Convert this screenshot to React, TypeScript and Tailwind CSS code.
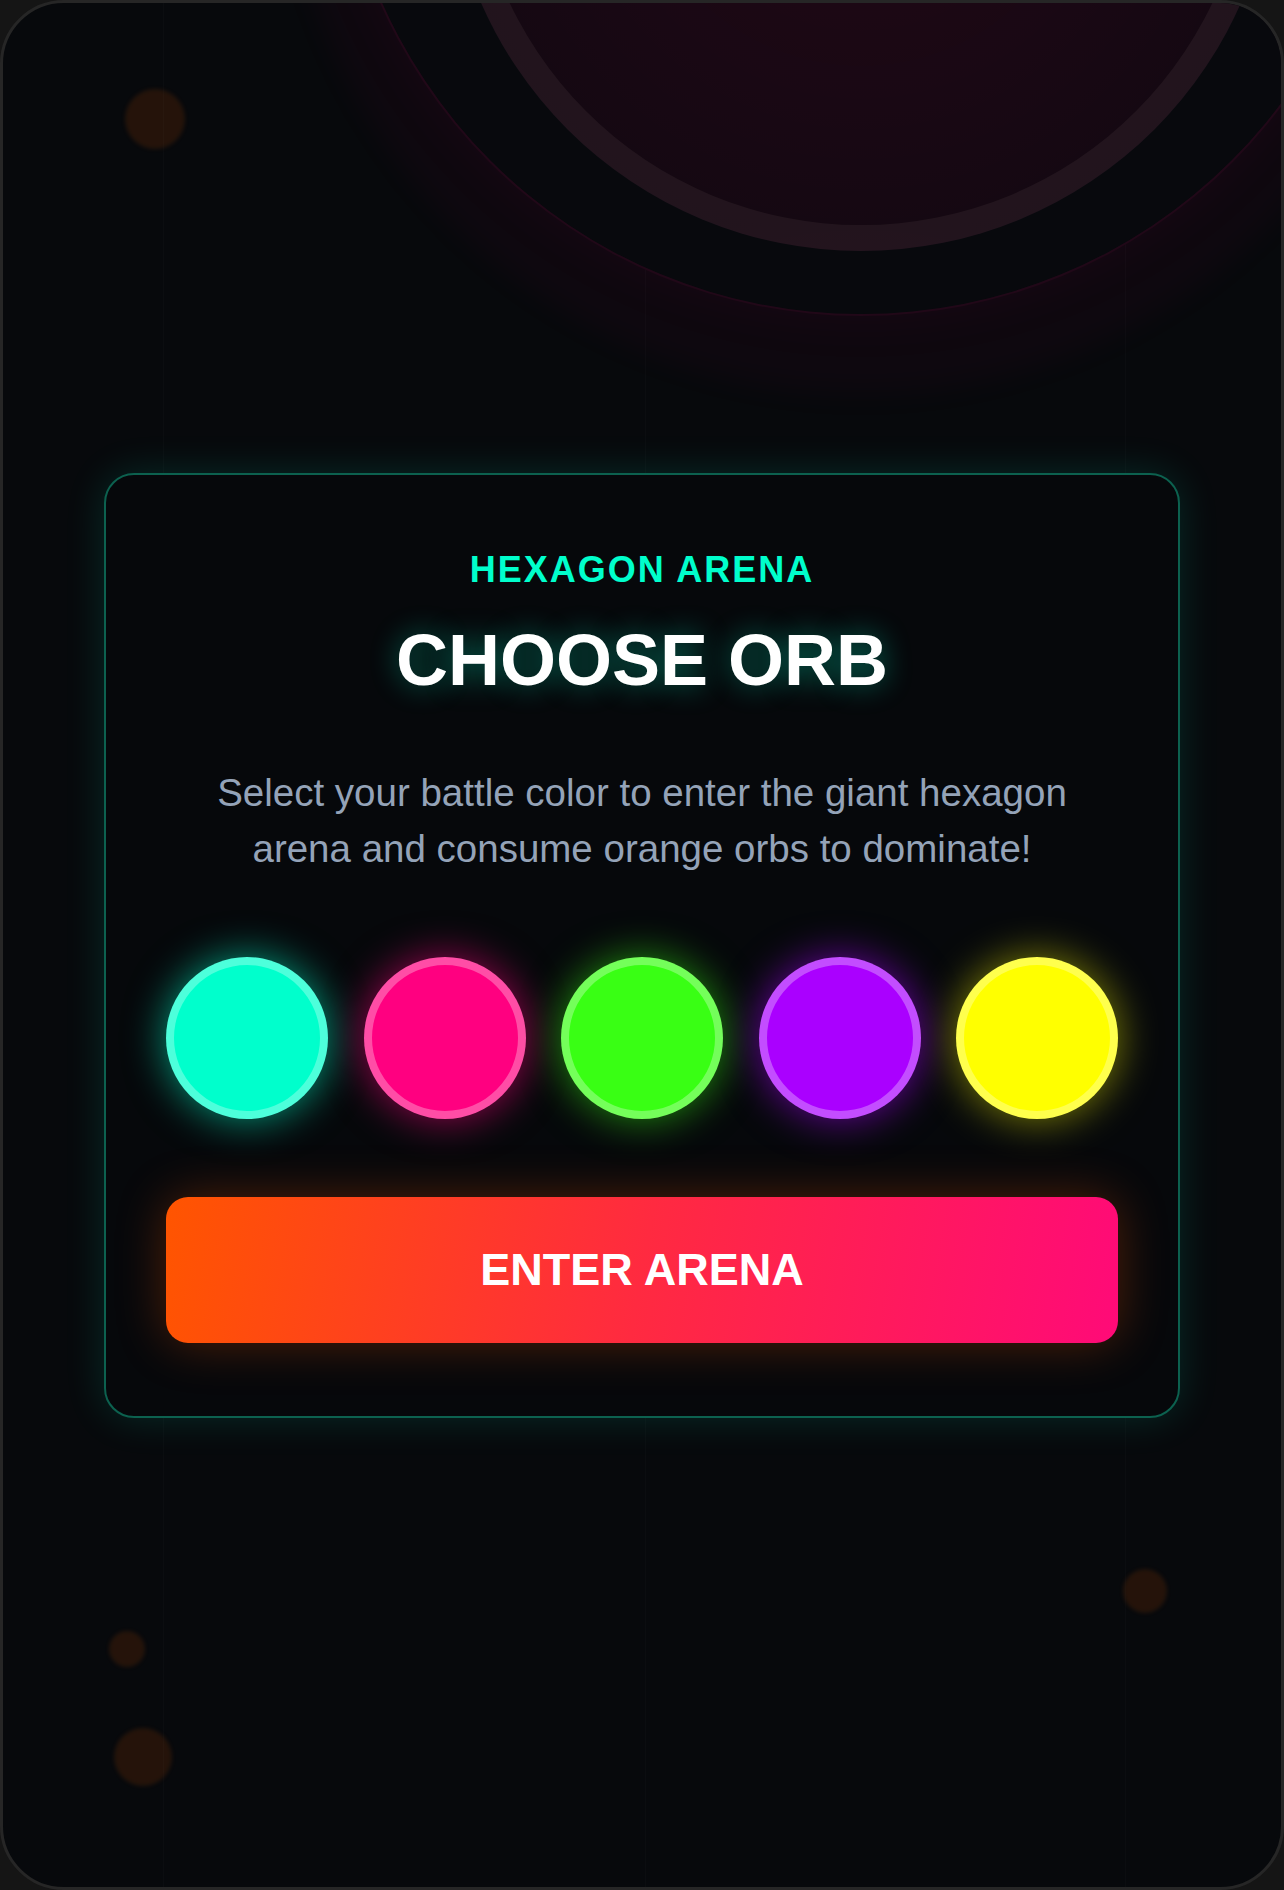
const orbs = [
  { name: 'cyan', className: 'bg-[#00ffcc] shadow-[0_0_40px_rgba(0,255,204,0.6)]' },
  { name: 'pink', className: 'bg-[#ff0080] shadow-[0_0_40px_rgba(255,0,128,0.6)]' },
  { name: 'green', className: 'bg-[#39ff14] shadow-[0_0_40px_rgba(57,255,20,0.55)]' },
  { name: 'purple', className: 'bg-[#aa00ff] shadow-[0_0_40px_rgba(170,0,255,0.6)]' },
  { name: 'yellow', className: 'bg-[#ffff00] shadow-[0_0_40px_rgba(255,255,0,0.5)]' },
];

function Backdrop() {
  return (
    <div className="pointer-events-none absolute inset-0">
      {/* faint grid lines */}
      <div className="absolute top-0 bottom-0 left-[160px] w-px bg-white/[0.018]" />
      <div className="absolute top-0 bottom-0 left-[642px] w-px bg-white/[0.02]" />
      <div className="absolute top-0 bottom-0 left-[1122px] w-px bg-white/[0.018]" />

      {/* arena rings */}
      <div className="absolute left-[280px] top-[-764px] h-[1156px] w-[1156px] rounded-full bg-[rgba(255,0,128,0.03)] blur-[14px]" />
      <div className="absolute left-[332px] top-[-739px] h-[1052px] w-[1052px] rounded-full border-2 border-[rgba(255,0,128,0.1)] bg-[#08090d] shadow-[0_0_60px_rgba(255,0,128,0.05)]" />
      <div className="absolute left-[443px] top-[-582px] h-[830px] w-[830px] rounded-full border-[26px] border-[rgba(255,225,240,0.055)] bg-[radial-gradient(circle,rgba(255,0,110,0.1)_0%,rgba(255,0,110,0.075)_45%,rgba(255,0,110,0.035)_100%)]" />

      {/* drifting orange orbs */}
      <div className="absolute left-[122px] top-[86px] h-[60px] w-[60px] rounded-full bg-[rgba(255,100,0,0.12)] blur-[2px]" />
      <div className="absolute left-[1120px] top-[1566px] h-[44px] w-[44px] rounded-full bg-[rgba(255,100,0,0.12)] blur-[2px]" />
      <div className="absolute left-[106px] top-[1628px] h-[36px] w-[36px] rounded-full bg-[rgba(255,100,0,0.12)] blur-[2px]" />
      <div className="absolute left-[111px] top-[1725px] h-[58px] w-[58px] rounded-full bg-[rgba(255,100,0,0.12)] blur-[2px]" />
    </div>
  );
}

export default function App() {
  return (
    <div className="h-[1890px] w-[1284px] bg-[#151515] font-['Liberation_Sans',Arial,sans-serif]">
      <div className="relative flex h-full w-full items-center justify-center overflow-hidden rounded-[64px] border-[3px] border-[#262626] bg-[#07090c]">
        <Backdrop />

        <div className="relative w-[1076px] rounded-[30px] border-2 border-[#0c614f] bg-[#06080b] px-[60px] pt-[77px] pb-[73px] text-center shadow-[0_0_40px_rgba(0,255,204,0.14)]">
          <p className="text-[36px] leading-none font-bold tracking-[2px] text-[#00ffcc]">
            HEXAGON ARENA
          </p>
          <h1 className="mt-[36px] text-[72px] leading-none font-bold text-white [text-shadow:0_0_28px_rgba(0,255,204,0.4)]">
            CHOOSE ORB
          </h1>
          <p className="mx-auto mt-[69px] max-w-[900px] text-[38.5px] leading-[56px] text-[#94a3b8]">
            Select your battle color to enter the giant hexagon arena and consume orange orbs to dominate!
          </p>

          <div className="mt-[80px] flex justify-between">
            {orbs.map((orb) => (
              <button
                key={orb.name}
                aria-label={orb.name}
                className={`h-[162px] w-[162px] rounded-full border-8 border-white/30 ${orb.className}`}
              />
            ))}
          </div>

          <button className="mt-[78px] flex h-[146px] w-full items-center justify-center rounded-[22px] bg-[linear-gradient(100deg,#ff5500_0%,#ff2a40_50%,#ff0a78_100%)] text-[45px] font-bold text-white shadow-[0_0_50px_rgba(255,85,0,0.3)]">
            ENTER ARENA
          </button>
        </div>
      </div>
    </div>
  );
}
